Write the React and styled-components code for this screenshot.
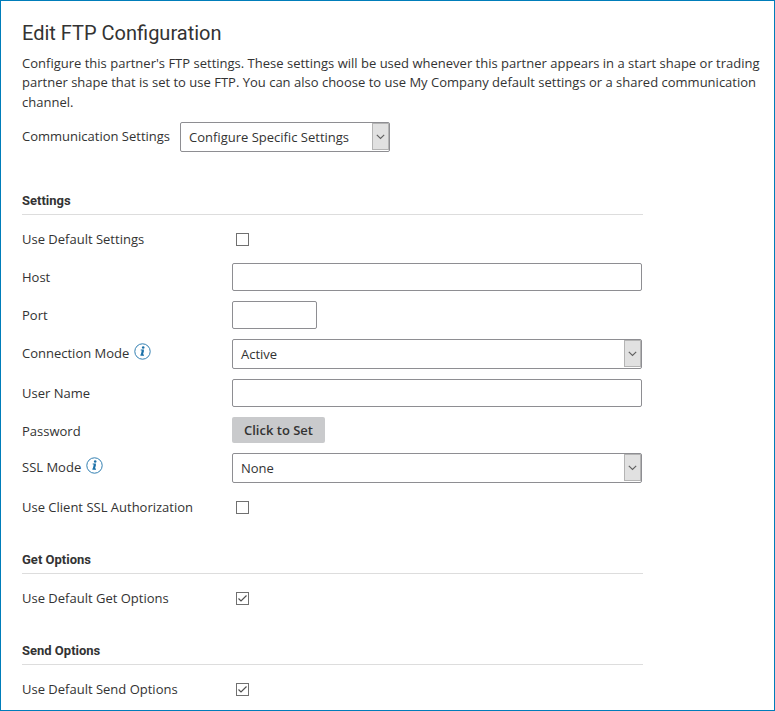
import React from 'react';
import styled, { createGlobalStyle } from 'styled-components';

const Global = createGlobalStyle`
  *{box-sizing:border-box}
  body{margin:0;background:#fff}
`;
const Page = styled.main`
  width:775px;height:711px;border:1px solid #007dba;padding:19px 0 0 21px;overflow:hidden;
  font:13px/20px "Open Sans",sans-serif;color:#333;
`;
const Title = styled.h1`margin:0;font:400 20px/26px Roboto,sans-serif;color:#333;`;
const Intro = styled.p`margin:8px 0 0;line-height:19.4px;letter-spacing:.006px;white-space:pre;`;
const TopRow = styled.div`display:flex;align-items:center;gap:10px;margin-top:9.8px;height:30px;`;
const TopLabel = styled.span`padding-bottom:2px;`;
const Section = styled.section`width:620.500px;margin-top:${p => p.$gap}px;`;
const Heading = styled.h2`
  margin:0 0 5px;height:24px;border-bottom:1px solid #ddd;font:700 13px/20px Roboto,sans-serif;color:#333;
`;
const Row = styled.div`display:grid;grid-template-columns:210px 1fr;align-items:center;height:${p => p.$h || 38}px;`;
const Label = styled.span`
  display:flex;align-items:center;gap:5px;white-space:nowrap;
  padding-top:${p => p.$down || 0}px;padding-bottom:${p => p.$up || 0}px;
`;
const Input = styled.input`
  width:${p => p.$w}px;height:28px;border:1px solid #8e8e92;border-radius:2px;background:#fff;padding:0 8px;font:inherit;outline:0;
`;
const SelectBox = styled.div`
  display:flex;width:${p => p.$w}px;height:30px;border:1px solid #8e8e92;border-radius:2px;padding-left:8px;line-height:28px;
`;
const SelectText = styled.span`flex:1;`;
const Arrow = styled.span`
  width:17px;margin-bottom:1px;background:#e1e1e1;border:1px solid #b4b4b4;display:flex;align-items:center;justify-content:center;
`;
const Button = styled.button`
  width:93px;height:26px;padding:0;border:0;border-radius:2px;background:#c9cacc;font:600 13px/26px "Open Sans",sans-serif;color:#333;
`;
const Check = styled.span`display:block;width:13px;height:13px;margin:1px 0 0 4px;border:1px solid #707070;background:#fff;svg{display:block}`;
const InfoIcon = styled.svg`margin-bottom:3px;`;

const Select = ({ w, children }) => (
  <SelectBox $w={w}><SelectText>{children}</SelectText>
    <Arrow><svg width="9" height="6" viewBox="0 0 9 6" fill="none" stroke="#606060"><path d="M.8.8 4.500 4.400 8.200.8" strokeWidth="1.150" /></svg></Arrow>
  </SelectBox>
);
const Info = () => (
  <InfoIcon width="17" height="17" viewBox="0 0 17 17" fill="none" stroke="#1b70a8">
    <circle cx="8.500" cy="8.500" r="7.700" strokeWidth=".9" />
    <path d="M6.700 7h2.500L8 12.200h2M6.400 12.200H8" strokeWidth="1.200" />
    <path d="M8.900 7.200 7.800 12" strokeWidth="2.100" />
    <circle cx="9.200" cy="4.500" r="1.300" fill="#1b70a8" stroke="none" />
  </InfoIcon>
);
const Checkbox = ({ checked }) => (
  <Check>{checked && <svg width="11" height="11" fill="none" stroke="#505050"><path d="m1.500 5.500 2.500 2.500L9.500 2.500" strokeWidth="1.200" /></svg>}</Check>
);

export default function App() {
  return (<><Global /><Page>
    <Title>Edit FTP Configuration</Title>
    <Intro>{"Configure this partner's FTP settings. These settings will be used whenever this partner appears in a start shape or trading\npartner shape that is set to use FTP. You can also choose to use My Company default settings or a shared communication\nchannel."}</Intro>
    <TopRow><TopLabel>Communication Settings</TopLabel><Select w={210}>Configure Specific Settings</Select></TopRow>
    <Section $gap={39}>
      <Heading>Settings</Heading>
      <Row><Label>Use Default Settings</Label><Checkbox /></Row>
      <Row><Label>Host</Label><Input $w={410} /></Row>
      <Row><Label>Port</Label><Input $w={85} /></Row>
      <Row $h={40}><Label $up={2}>Connection Mode <Info /></Label><Select w={410}>Active</Select></Row>
      <Row><Label>User Name</Label><Input $w={410} /></Row>
      <Row $h={36}><Label $down={2}>Password</Label><Button>Click to Set</Button></Row>
      <Row $h={40}><Label $up={2}>SSL Mode <Info /></Label><Select w={410}>None</Select></Row>
      <Row><Label>Use Client SSL Authorization</Label><Checkbox /></Row>
    </Section>
    <Section $gap={24}><Heading>Get Options</Heading><Row><Label>Use Default Get Options</Label><Checkbox checked /></Row></Section>
    <Section $gap={24}><Heading>Send Options</Heading><Row><Label>Use Default Send Options</Label><Checkbox checked /></Row></Section>
  </Page></>);
}
